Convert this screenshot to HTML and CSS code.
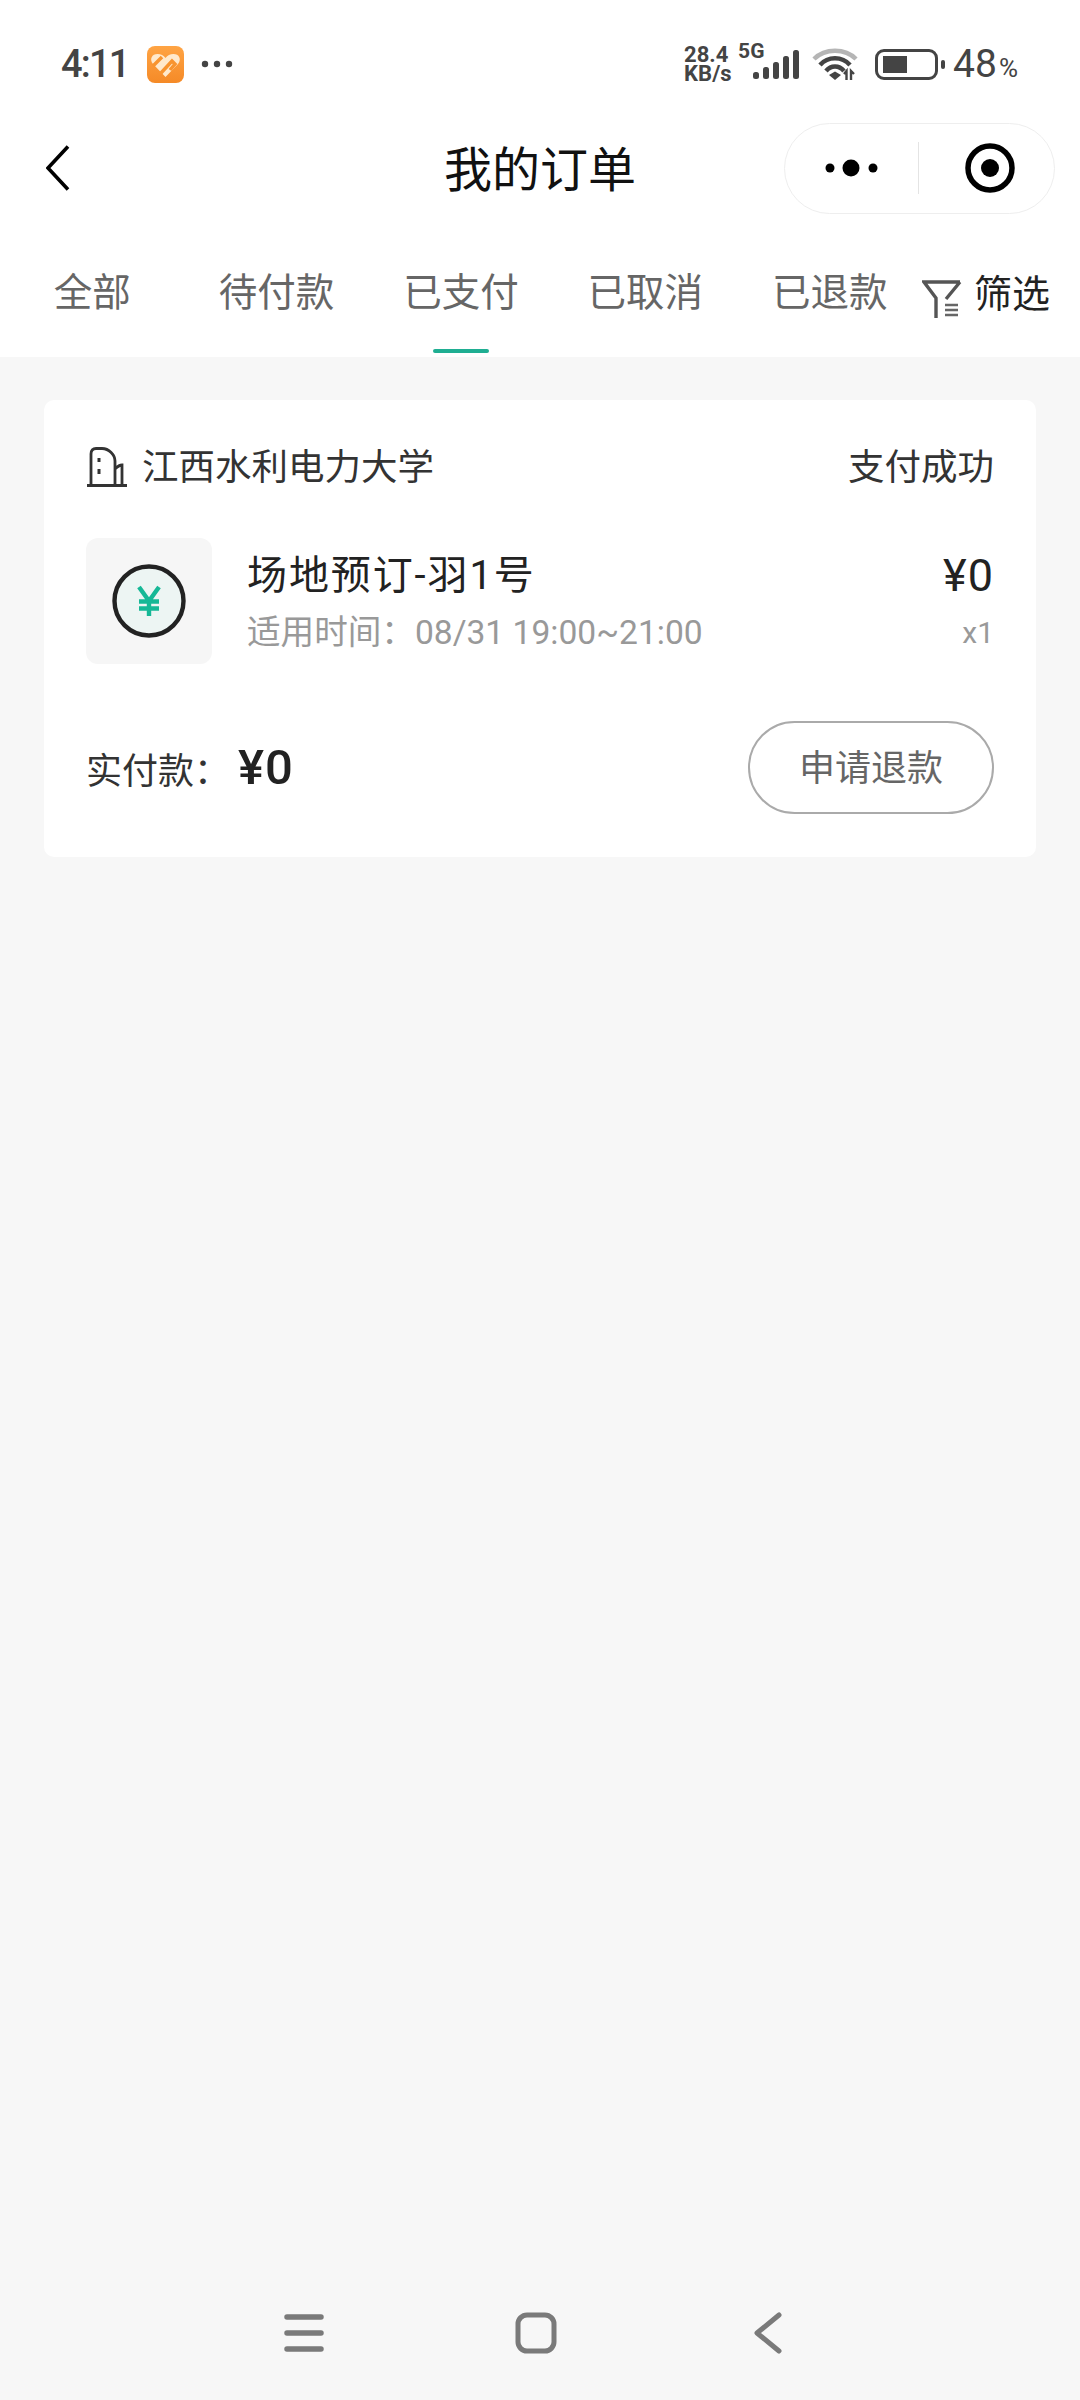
FILE: index.html
```html
<!DOCTYPE html>
<html>
<head>
    <title>我的订单</title>
    <link rel="stylesheet" href="styles.css">
</head>
<body>
    <div class="page">
        <div class="status-bar">
            <div class="status-left">
                <span class="clock">4:11</span>
                <svg class="app-badge" viewBox="0 0 37 37">
                    <defs>
                        <linearGradient id="badge-fill" x1="0" y1="0" x2="0" y2="1">
                            <stop offset="0" stop-color="#ffa444"/>
                            <stop offset="1" stop-color="#f58a27"/>
                        </linearGradient>
                    </defs>
                    <rect width="37" height="37" rx="8" fill="url(#badge-fill)"/>
                    <path d="M18.5 31 L6 18 C2 13 5 8 10.500 8 C14 8 16.500 9.500 18.500 12 C20.500 9.500 23 8 26.500 8 C32 8 35 13 31 18 Z" fill="#ffe9cc"/>
                    <path d="M6 20 L15 11 M14 27 L25 15 L28 18 L23 24" fill="none" stroke="#f8942f" stroke-width="3.500"/>
                </svg>
                <svg class="more-dots" viewBox="0 0 32 8">
                    <circle cx="4" cy="4" r="3.200"/>
                    <circle cx="16" cy="4" r="3.200"/>
                    <circle cx="28" cy="4" r="3.200"/>
                </svg>
            </div>
            <div class="status-right">
                <div class="speed"><span>28.4</span><span>KB/s</span></div>
                <div class="signal">
                    <span class="net-type">5G</span>
                    <svg class="bars" viewBox="0 0 46 30">
                        <rect x="0" y="22" width="6" height="7" rx="2.500"/>
                        <rect x="10" y="17" width="6" height="12" rx="2.500"/>
                        <rect x="20" y="12" width="6" height="17" rx="2.500"/>
                        <rect x="30" y="6" width="6" height="23" rx="2.500"/>
                        <rect x="40" y="0" width="6" height="29" rx="2.500"/>
                    </svg>
                </div>
                <svg class="wifi" viewBox="0 0 46 34">
                    <path d="M2 12 C13 1 33 1 44 12" fill="none" stroke="#b5b5b5" stroke-width="4.500"/>
                    <path d="M8 18 C16 9 30 9 38 18" fill="none" stroke="#444" stroke-width="4.500"/>
                    <path d="M14 24 C19 18 27 18 32 24" fill="none" stroke="#444" stroke-width="4.500"/>
                    <path d="M17 28 L23 24.500 L29 28 L23 33 Z" fill="#444"/>
                    <path d="M32 27 L34.500 24 V33 M39 33 V24 L42 27" fill="none" stroke="#444" stroke-width="2.400"/>
                </svg>
                <div class="battery">
                    <div class="battery-shell"><div class="battery-level"></div></div>
                    <div class="battery-tip"></div>
                </div>
                <div class="percent">48<small>%</small></div>
            </div>
        </div>

        <header class="title-bar">
            <svg class="back" viewBox="0 0 24 46">
                <path d="M22 1.500 L2 23 L22 44.500" fill="none" stroke="#000" stroke-width="3.600"/>
            </svg>
            <h1>我的订单</h1>
            <div class="capsule">
                <div class="capsule-cell">
                    <svg class="capsule-more" viewBox="0 0 54 18">
                        <circle cx="5" cy="9" r="4.500"/>
                        <circle cx="26" cy="9" r="8.500"/>
                        <circle cx="48" cy="9" r="4.500"/>
                    </svg>
                </div>
                <div class="capsule-cell">
                    <svg class="capsule-target" viewBox="0 0 50 50">
                        <circle cx="25" cy="25" r="22" fill="none" stroke="#000" stroke-width="5.500"/>
                        <circle cx="25" cy="25" r="9"/>
                    </svg>
                </div>
            </div>
        </header>

        <nav class="tabs">
            <a class="tab">全部</a>
            <a class="tab">待付款</a>
            <a class="tab active">已支付</a>
            <a class="tab">已取消</a>
            <a class="tab">已退款</a>
            <div class="filter">
                <svg class="filter-icon" viewBox="0 0 40 40">
                    <path d="M38 3 H2 L14 19 V39 M38 3 L24 20" fill="none" stroke="#555" stroke-width="3.400"/>
                    <path d="M23 26 H36 M23 31 H36 M23 36 H36" fill="none" stroke="#666" stroke-width="2.400"/>
                </svg>
                <span>筛选</span>
            </div>
        </nav>

        <main>
            <section class="order-card">
                <div class="order-head">
                    <div class="venue">
                        <svg class="venue-icon" viewBox="0 0 42 40">
                            <path d="M1 38.500 H41" fill="none" stroke="#333" stroke-width="3"/>
                            <path d="M5 38 V7 C5 3 7 1.500 10 1.500 H16 C23 1.500 29 8 29 14 V38 M29 22 C31 20 33 18 36 18 V38" fill="none" stroke="#333" stroke-width="2.800"/>
                            <path d="M13 11 V15 M13 22 V27" fill="none" stroke="#333" stroke-width="3"/>
                        </svg>
                        <span>江西水利电力大学</span>
                    </div>
                    <span class="order-state">支付成功</span>
                </div>

                <div class="order-item">
                    <div class="thumb">
                        <svg class="coin" viewBox="0 0 74 74">
                            <circle cx="37" cy="37" r="34.500" fill="#edf5f3" stroke="#222" stroke-width="4.400"/>
                            <path d="M27 23 L37 37 L47 23 M37 37 V52 M27 37.500 H47 M27 44.500 H47" fill="none" stroke="#16b896" stroke-width="4.400"/>
                        </svg>
                    </div>
                    <div class="item-info">
                        <div class="item-name">场地预订-羽1号</div>
                        <div class="item-time">适用时间：08/31 19:00~21:00</div>
                    </div>
                    <div class="item-price">
                        <div class="item-amount">¥0</div>
                        <div class="item-qty">x1</div>
                    </div>
                </div>

                <div class="order-foot">
                    <div class="paid">
                        <span class="paid-label">实付款：</span>
                        <span class="paid-value">¥0</span>
                    </div>
                    <button class="refund">申请退款</button>
                </div>
            </section>
        </main>

        <div class="nav-bar">
            <div class="nav-cell">
                <svg class="nav-menu" viewBox="0 0 40 38">
                    <path d="M3 3 H37 M3 19 H37 M3 35 H37" fill="none" stroke="#7a7a7a" stroke-width="5.500" stroke-linecap="round"/>
                </svg>
            </div>
            <div class="nav-cell">
                <svg class="nav-home" viewBox="0 0 42 42">
                    <rect x="3" y="3" width="36" height="36" rx="9" fill="none" stroke="#7a7a7a" stroke-width="5"/>
                </svg>
            </div>
            <div class="nav-cell">
                <svg class="nav-back" viewBox="0 0 28 42">
                    <path d="M25 3 L3 21 L25 39" fill="none" stroke="#7a7a7a" stroke-width="5" stroke-linecap="round" stroke-linejoin="round"/>
                </svg>
            </div>
        </div>
    </div>
</body>
</html>
```

FILE: styles.css
```css
* {
    box-sizing: border-box;
}

body {
    font-family: 'Roboto', 'Noto Sans CJK SC', sans-serif;
    margin: 0;
    padding: 0;
    background-color: #f7f7f7;
    color: #333;
}

.page {
    display: flex;
    flex-direction: column;
    height: 2400px;
    overflow: hidden;
}

/* status bar */
.status-bar {
    display: flex;
    justify-content: space-between;
    align-items: center;
    height: 123px;
    padding: 5px 62px 0 61px;
    background-color: #fff;
    color: #444;
}

.status-left {
    display: flex;
    align-items: center;
}

.clock {
    font-size: 38px;
    font-weight: 500;
    letter-spacing: -1.800px;
}

.app-badge {
    width: 37px;
    height: 37px;
    margin-left: 18px;
}

.more-dots {
    width: 32px;
    height: 8px;
    margin-left: 17px;
    fill: #444;
}

.status-right {
    display: flex;
    align-items: center;
}

.speed {
    display: flex;
    flex-direction: column;
    width: 54px;
    font-size: 22px;
    font-weight: 700;
    line-height: 19px;
}

.signal {
    position: relative;
    width: 61px;
    height: 36px;
}

.net-type {
    position: absolute;
    left: 0;
    top: -7px;
    font-size: 21px;
    line-height: 24px;
    font-weight: 700;
}

.bars {
    position: absolute;
    right: 0;
    bottom: 2px;
    width: 46px;
    height: 30px;
    fill: #444;
}

.wifi {
    width: 46px;
    height: 34px;
    margin-left: 13px;
}

.battery {
    display: flex;
    align-items: center;
    margin-left: 17px;
}

.battery-shell {
    width: 63px;
    height: 31px;
    padding: 4px 5px;
    border: 3px solid #444;
    border-radius: 9px;
}

.battery-level {
    width: 24px;
    height: 100%;
    background-color: #444;
}

.battery-tip {
    width: 4px;
    height: 9px;
    margin-left: 3px;
    border-radius: 2px;
    background-color: #444;
}

.percent {
    margin-left: 8px;
    font-size: 39px;
}

.percent small {
    font-size: 26px;
    margin-left: 2px;
}

/* title bar */
.title-bar {
    position: relative;
    display: flex;
    justify-content: space-between;
    align-items: center;
    height: 90px;
    padding: 0 25px 0 46px;
    background-color: #fff;
}

.back {
    width: 24px;
    height: 46px;
}

.title-bar h1 {
    position: absolute;
    left: 0;
    right: 0;
    margin: -5px 0 0;
    font-size: 48px;
    font-weight: 400;
    text-align: center;
    color: #111;
}

.capsule {
    display: flex;
    align-items: center;
    width: 271px;
    height: 91px;
    border: 1px solid #eee;
    border-radius: 46px;
}

.capsule-cell {
    display: flex;
    justify-content: center;
    align-items: center;
    width: 135px;
    height: 52px;
}

.capsule-cell:first-child {
    border-right: 1px solid #e4e4e4;
}

.capsule-cell:last-child {
    padding-left: 7px;
}

.capsule-more {
    width: 54px;
    height: 18px;
}

.capsule-target {
    width: 50px;
    height: 50px;
}

/* order status tabs */
.tabs {
    display: flex;
    height: 144px;
    background-color: #fff;
}

.tab {
    display: flex;
    flex-direction: column;
    align-items: center;
    width: 184.400px;
    padding-top: 54px;
    font-size: 38.500px;
    line-height: 52px;
    color: #666;
}

.tab.active::after {
    content: "";
    width: 56px;
    height: 4px;
    margin-top: 30px;
    border-radius: 2px;
    background-color: #1fae92;
}

.filter {
    display: flex;
    align-items: flex-start;
    padding-top: 66px;
    font-size: 38px;
    line-height: 52px;
    color: #222;
}

.filter span {
    margin-top: -11px;
    margin-left: 12px;
}

.filter-icon {
    width: 40px;
    height: 40px;
}

/* order card */
.order-card {
    margin: 43px 44px 0;
    padding: 42px 42px 43px;
    border-radius: 10px;
    background-color: #fff;
}

.order-head {
    display: flex;
    justify-content: space-between;
    align-items: center;
    height: 44px;
    font-size: 36.500px;
}

.venue {
    display: flex;
    align-items: center;
}

.venue-icon {
    width: 42px;
    height: 40px;
    margin-top: 6px;
    margin-right: 14px;
}

.order-item {
    display: flex;
    height: 126px;
    margin-top: 52px;
}

.thumb {
    display: flex;
    justify-content: center;
    align-items: center;
    width: 126px;
    height: 126px;
    border-radius: 12px;
    background-color: #f6f6f6;
}

.coin {
    width: 74px;
    height: 74px;
}

.item-info {
    flex: 1;
    margin-left: 35px;
    padding-top: 13px;
}

.item-price {
    padding-top: 13px;
    text-align: right;
}

.item-name {
    font-size: 40px;
    line-height: 50px;
    letter-spacing: 1.900px;
    color: #222;
}

.item-amount {
    font-size: 45px;
    line-height: 50px;
    letter-spacing: 1px;
    color: #222;
}

.item-time,
.item-qty {
    margin-top: 10px;
    font-size: 33.600px;
    line-height: 44px;
    color: #999;
}

.item-qty {
    font-size: 30px;
}

.order-foot {
    display: flex;
    justify-content: space-between;
    align-items: center;
    margin-top: 57px;
}

.paid {
    display: flex;
    align-items: center;
}

.paid-label {
    width: 152px;
    font-size: 36px;
}

.paid-value {
    font-size: 49px;
    font-weight: 500;
    letter-spacing: 1px;
    color: #222;
}

.refund {
    width: 246px;
    height: 93px;
    padding: 0 0 5px;
    border: 2px solid #aaa;
    border-radius: 47px;
    background-color: #fff;
    font-family: inherit;
    font-size: 36px;
    color: #666;
}

main {
    flex: 1;
}

/* system navigation */
.nav-bar {
    display: flex;
    justify-content: center;
    padding: 0 8px 47px 0;
}

.nav-cell {
    display: flex;
    justify-content: center;
    align-items: center;
    width: 232px;
    height: 40px;
}

.nav-menu {
    width: 40px;
    height: 38px;
}

.nav-home {
    width: 42px;
    height: 42px;
}

.nav-back {
    width: 28px;
    height: 42px;
}
```
